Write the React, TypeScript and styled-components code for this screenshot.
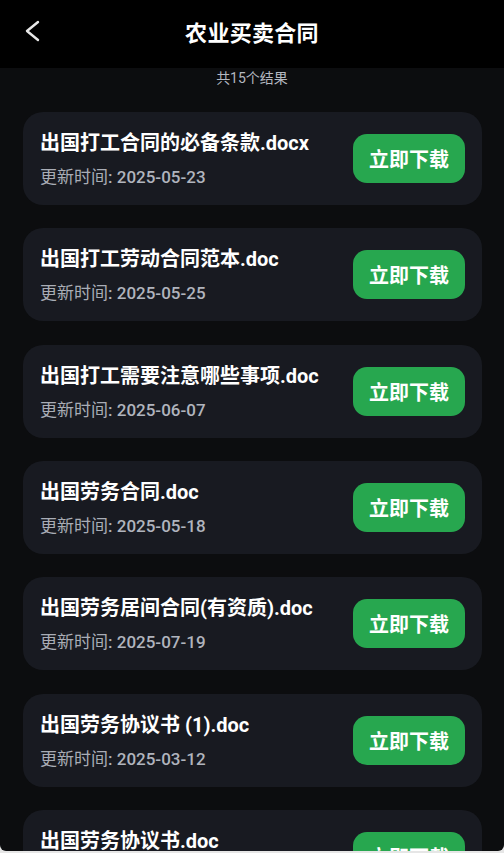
import React from "react";
import styled, { createGlobalStyle } from "styled-components";

const Global = createGlobalStyle`
  html, body { margin: 0; padding: 0; background: #e6e6e6; }
  body { font-family: Roboto, "Noto Sans CJK SC", sans-serif; }
`;

const Screen = styled.div`
  width: 504px;
  height: 851px;
  overflow: hidden;
  background: #0c0d0f;
  border-radius: 0 0 6px 6px;
  display: flex;
  flex-direction: column;
`;

const Header = styled.header`
  height: 68px;
  flex: none;
  background: #000;
  display: grid;
  grid-template-columns: 64px 1fr 64px;
  align-items: center;
`;

const BackButton = styled.button`
  background: none;
  border: 0;
  padding: 0 0 0 24px;
  height: 40px;
  margin-top: -6px;
  display: flex;
  align-items: center;
  cursor: pointer;
`;

const Title = styled.h1`
  margin: 0;
  margin-top: -6px;
  text-align: center;
  color: #fff;
  font-size: 22px;
  font-weight: 700;
  letter-spacing: 0.3px;
`;

const Count = styled.div`
  text-align: center;
  color: #b4b8c0;
  font-size: 14px;
  line-height: 20px;
`;

const List = styled.div`
  display: flex;
  flex-direction: column;
  gap: 23.33px;
  padding: 24px 22px 0 23px;
`;

const Card = styled.div`
  flex: none;
  height: 93px;
  box-sizing: border-box;
  background: #181a21;
  border-radius: 20px;
  padding: 0 17px;
  display: flex;
  align-items: center;
  justify-content: space-between;
`;

const Info = styled.div`
  display: flex;
  flex-direction: column;
  gap: 9px;
`;

const Name = styled.div`
  color: #fff;
  font-size: 20px;
  font-weight: 700;
  line-height: 28px;
  white-space: nowrap;
`;

const Date = styled.div`
  color: #a9adb6;
  font-size: 17px;
  font-weight: 400;
  line-height: 22px;
`;

const DateValue = styled.span`
  font-weight: 500;
  color: #b0b4bd;
`;

const Download = styled.button`
  flex: none;
  width: 112px;
  height: 49px;
  border: 0;
  border-radius: 14px;
  background: #27a74f;
  color: #fff;
  font-family: Roboto, "Noto Sans CJK SC", sans-serif;
  font-size: 20px;
  font-weight: 700;
  cursor: pointer;
`;

const items = [
  { name: "出国打工合同的必备条款.docx", date: "2025-05-23" },
  { name: "出国打工劳动合同范本.doc", date: "2025-05-25" },
  { name: "出国打工需要注意哪些事项.doc", date: "2025-06-07" },
  { name: "出国劳务合同.doc", date: "2025-05-18" },
  { name: "出国劳务居间合同(有资质).doc", date: "2025-07-19" },
  { name: "出国劳务协议书 (1).doc", date: "2025-03-12" },
  { name: "出国劳务协议书.doc", date: "2025-04-02" },
];

export default function App() {
  return (
    <>
      <Global />
      <Screen>
        <Header>
          <BackButton aria-label="返回">
            <svg width="16" height="22" viewBox="0 0 16 22" fill="none">
              <path d="M14 2 L3 11 L14 20" stroke="#e8e8e8" strokeWidth="2.4" strokeLinecap="round" strokeLinejoin="round" />
            </svg>
          </BackButton>
          <Title>农业买卖合同</Title>
          <div />
        </Header>
        <Count>共15个结果</Count>
        <List>
          {items.map((it) => (
            <Card key={it.name}>
              <Info>
                <Name>{it.name}</Name>
                <Date>
                  更新时间<DateValue>: {it.date}</DateValue>
                </Date>
              </Info>
              <Download>立即下载</Download>
            </Card>
          ))}
        </List>
      </Screen>
    </>
  );
}
